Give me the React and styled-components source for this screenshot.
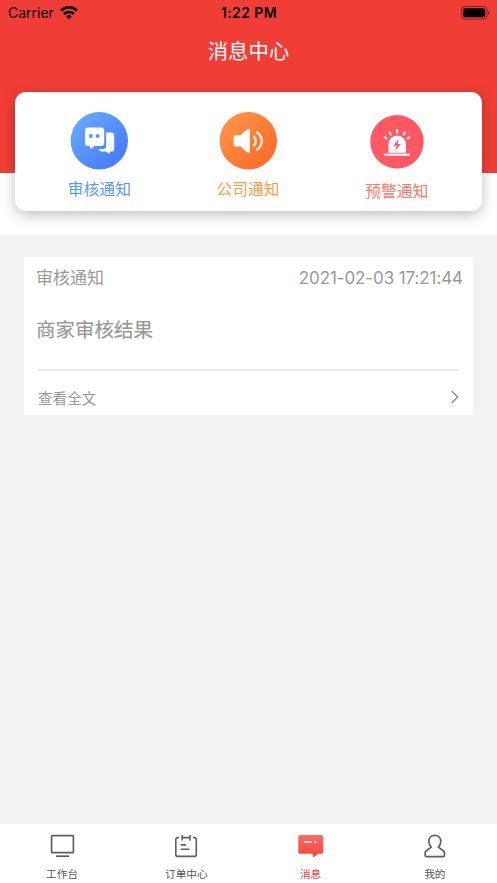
import React from 'react';
import styled, { createGlobalStyle } from 'styled-components';

const GlobalStyle = createGlobalStyle`
  * {
    box-sizing: border-box;
  }

  body {
    margin: 0;
    background: #f2f2f2;
    font-family: Inter, 'Noto Sans CJK SC', sans-serif;
  }
`;

const Screen = styled.div`
  height: 883px;
  display: flex;
  flex-direction: column;
  overflow: hidden;
`;

const Top = styled.div`
  height: 235px;
  padding: 0 15px;
  background: linear-gradient(#f03e37 173px, #fff 173px);
`;

const StatusBar = styled.div`
  height: 25px;
  margin: 0 -15px;
  padding: 0 7px 0 8px;
  display: grid;
  grid-template-columns: 1fr auto 1fr;
  align-items: center;
  color: #000;
  font-size: 14px;
  line-height: 25px;
`;

const Carrier = styled.div`
  display: flex;
  align-items: center;
  gap: 6px;
`;

const Clock = styled.div`
  font-weight: 600;
  letter-spacing: 0.4px;
`;

const BatteryIcon = styled.svg`
  justify-self: end;
`;

const Title = styled.h1`
  height: 66.5px;
  margin: 0;
  padding-top: 12px;
  color: #fff;
  font-size: 20.4px;
  font-weight: 400;
  line-height: 30px;
  text-align: center;
`;

const Categories = styled.div`
  height: 119.5px;
  padding: 20px 11px 0 10px;
  display: flex;
  border-radius: 11px;
  background: #fff;
  box-shadow: 0 4px 14px rgba(0, 0, 0, 0.25);
`;

const Category = styled.div`
  flex: 1;
  display: flex;
  flex-direction: column;
  align-items: center;
  gap: ${(props) => (props.$small ? '11px' : '8px')};
  padding-top: ${(props) => (props.$small ? '3px' : '0')};
  color: ${(props) => props.color};
  font-size: 15.8px;
  line-height: 24px;

  & > svg {
    display: block;
    width: ${(props) => (props.$small ? '54px' : '58px')};
    height: ${(props) => (props.$small ? '54px' : '58px')};
  }
`;

const Content = styled.div`
  flex: 1;
  padding: 22px 24px;
`;

const Notice = styled.div`
  height: 158px;
  background: #fff;
  color: #999;
`;

const NoticeHeader = styled.div`
  display: flex;
  justify-content: space-between;
  padding: 9px 10px 0 12px;
  font-size: 17px;
  line-height: 24px;
`;

const NoticeDate = styled.span`
  letter-spacing: -0.1px;
`;

const NoticeTitle = styled.div`
  padding: 25px 12px 0;
  height: 79px;
  font-size: 19.5px;
  -webkit-text-stroke: 0.2px currentColor;
  line-height: 30px;
`;

const NoticeFooter = styled.div`
  display: flex;
  align-items: center;
  justify-content: space-between;
  height: 46px;
  margin: 0 14px;
  padding-top: 8px;
  border-top: 2px solid #e8e8e8;
  font-size: 14.6px;
`;

const TabBar = styled.div`
  height: 59px;
  display: flex;
  background: #fff;
`;

const Tab = styled.div`
  flex: 1;
  display: flex;
  flex-direction: column;
  align-items: center;
  padding-top: 8px;
  gap: 7px;
  color: ${(props) => (props.$active ? '#f2403c' : '#555')};
  font-size: 10.7px;
  line-height: 16px;

  & > svg {
    display: block;
    flex: none;
  }
`;

const WifiIcon = () => (
  <svg width="18" height="14" viewBox="0 0 18 14">
    <g fill="none" stroke="#000" strokeWidth="2.6">
      <path d="M1 4.6a11.4 11.4 0 0 1 16 0" />
      <path d="M4 8a7.2 7.2 0 0 1 10 0" />
    </g>
    <path d="M9 13.2 6.2 10.4a4 4 0 0 1 5.6 0z" />
  </svg>
);

const Battery = () => (
  <BatteryIcon width="29" height="14" viewBox="0 0 29 14">
    <rect x="0.5" y="0.5" width="25.5" height="12.5" rx="3.6" fill="none" stroke="#000" strokeOpacity="0.45" />
    <rect x="2.2" y="2.2" width="22" height="9.1" rx="2" />
    <path d="M27.3 4.7c1.7.7 1.7 3.5 0 4.2z" fillOpacity="0.5" />
  </BatteryIcon>
);

const ReviewIcon = () => (
  <svg viewBox="0 0 58 58">
    <defs>
      <linearGradient id="review" x1="0" y1="0" x2="1" y2="1">
        <stop offset="0.1" stopColor="#66a9ff" />
        <stop offset="0.9" stopColor="#4579fd" />
      </linearGradient>
    </defs>
    <circle cx="29.3" cy="28.8" r="28.7" fill="url(#review)" />
    <path
      fill="#fff"
      d="M36.2 20.5h5a3 3 0 0 1 3 3v13.5a2.5 2.5 0 0 1-2.5 2.5h-1.9v1.2c0 .8-.8 1-1.4.5l-2.4-1.7h-4.3a3 3 0 0 1-3-2.6h4.5a3 3 0 0 0 3-3z"
    />
    <path
      fill="#fff"
      d="M18 15.5h13.2a3 3 0 0 1 3 3v12.6a3 3 0 0 1-3 3h-7l-2.6 2.4c-.6.5-1.5.2-1.5-.6v-1.8H18a3 3 0 0 1-3-3V18.5a3 3 0 0 1 3-3z"
    />
    <circle cx="20.8" cy="24" r="1.9" fill="#5494ff" />
    <circle cx="27.7" cy="24" r="1.9" fill="#5494ff" />
  </svg>
);

const CompanyIcon = () => (
  <svg viewBox="0 0 58 58">
    <defs>
      <linearGradient id="company" x1="0" y1="0" x2="1" y2="1">
        <stop offset="0.1" stopColor="#fd9447" />
        <stop offset="0.9" stopColor="#fc6b28" />
      </linearGradient>
    </defs>
    <circle cx="29.3" cy="28.8" r="28.7" fill="url(#company)" />
    <path
      fill="#fff"
      d="M16.7 23.3h4.8l7-6.2c.9-.8 2.3-.2 2.3.9v21.8c0 1.1-1.4 1.700-2.300.9l-7-6.200h-4.800a2 2 0 0 1-2-2v-7.200a2 2 0 0 1 2-2z"
    />
    <g fill="none" stroke="#fff" strokeWidth="2" strokeLinecap="round">
      <path d="M34.8 24.2c2.7 2.5 2.7 7 0 9.5" />
      <path d="M37.9 20.3c6.500 4.300 6.500 13.100 0 17.400" />
    </g>
  </svg>
);

const WarningIcon = () => (
  <svg viewBox="0 0 54 54">
    <circle cx="27" cy="26.8" r="26.7" fill="#ff5863" />
    <path fill="#fff" d="M18.5 37.7V29.2a8.7 8.7 0 0 1 17.4 0v8.5z" />
    <path fill="#fff" d="M14 38.6h26v2.1H14z" />
    <path fill="#ff5863" d="m28.8 24-5.4 6.7h3.3L25.2 36l5.6-6.9h-3.300z" />
    <path
      fill="none"
      stroke="#fff"
      strokeWidth="2"
      strokeLinecap="round"
      d="M14.8 22.2l1.8 1.3M19.6 17.4l1.1 2M27.2 15v2.5M34.8 17.4l-1.1 2M39.4 22.2l-1.8 1.3"
    />
  </svg>
);

const ArrowIcon = () => (
  <svg width="8" height="14" viewBox="0 0 8 14">
    <path d="M0.8 1l5.8 6-5.8 6" fill="none" stroke="#888" strokeWidth="1.3" />
  </svg>
);

const WorkbenchIcon = () => (
  <svg width="28" height="28" viewBox="0 0 28 28" fill="none" stroke="#606060" strokeWidth="1.7">
    <rect x="3.6" y="3.7" width="21.8" height="16.9" rx="0.7" />
    <path d="M8 24.2h13" />
  </svg>
);

const OrderIcon = () => (
  <svg width="28" height="28" viewBox="0 0 28 28" fill="none" stroke="#606060" strokeWidth="1.6">
    <path d="M7 5.6H5.8a2 2 0 0 0-2 2v14.8a2 2 0 0 0 2 2h16.5a2 2 0 0 0 2-2V7.6a2 2 0 0 0-2-2H21M10.3 5.6h7.5M10.2 3v5.5M18 3v5.5M8.7 12.9h5.2M8.7 17.2h8.6" />
  </svg>
);

const MessageIcon = () => (
  <svg width="28" height="28" viewBox="0 0 28 28">
    <defs>
      <linearGradient id="message" x1="0" y1="0" x2="0" y2="1">
        <stop offset="0" stopColor="#ff6b61" />
        <stop offset="1" stopColor="#f6423e" />
      </linearGradient>
    </defs>
    <path
      fill="url(#message)"
      d="M3.4 3h20.8a2 2 0 0 1 2 2v15.2a1.5 1.5 0 0 1-1.5 1.5h-3.3l-4.7 3.3c-.5.3-.9.1-.9-.5v-2.8H2.8a1.5 1.5 0 0 1-1.5-1.5V5a2 2 0 0 1 2.1-2z"
    />
    <path d="M7.2 10h7.4M17 10h2.8" fill="none" stroke="#fff" strokeWidth="1.7" />
  </svg>
);

const MineIcon = () => (
  <svg width="28" height="28" viewBox="0 0 28 28" fill="none" stroke="#606060" strokeWidth="1.7" strokeLinejoin="round">
    <path d="M13.8 3.3c-3.6 0-6 2.5-6 6 0 2.5 1 4.5 2.5 5.8L5 19c-.5.4-.8.9-.8 1.5v2.9c0 .8.4 1.2 1.2 1.2h16.8c.8 0 1.2-.4 1.2-1.2v-2.9c0-.6-.3-1.1-.8-1.5l-5.3-3.9c1.500-1.300 2.500-3.300 2.500-5.800 0-3.500-2.400-6-6-6z" />
  </svg>
);

const App = () => (
  <Screen>
    <GlobalStyle />
    <Top>
      <StatusBar>
        <Carrier>
          Carrier
          <WifiIcon />
        </Carrier>
        <Clock>1:22 PM</Clock>
        <Battery />
      </StatusBar>
      <Title>消息中心</Title>
      <Categories>
        <Category color="#5799fb">
          <ReviewIcon />
          审核通知
        </Category>
        <Category color="#ff9c43">
          <CompanyIcon />
          公司通知
        </Category>
        <Category color="#fb7768" $small>
          <WarningIcon />
          预警通知
        </Category>
      </Categories>
    </Top>
    <Content>
      <Notice>
        <NoticeHeader>
          <span>审核通知</span>
          <NoticeDate>2021-02-03 17:21:44</NoticeDate>
        </NoticeHeader>
        <NoticeTitle>商家审核结果</NoticeTitle>
        <NoticeFooter>
          <span>查看全文</span>
          <ArrowIcon />
        </NoticeFooter>
      </Notice>
    </Content>
    <TabBar>
      <Tab>
        <WorkbenchIcon />
        工作台
      </Tab>
      <Tab>
        <OrderIcon />
        订单中心
      </Tab>
      <Tab $active>
        <MessageIcon />
        消息
      </Tab>
      <Tab>
        <MineIcon />
        我的
      </Tab>
    </TabBar>
  </Screen>
);

export default App;
